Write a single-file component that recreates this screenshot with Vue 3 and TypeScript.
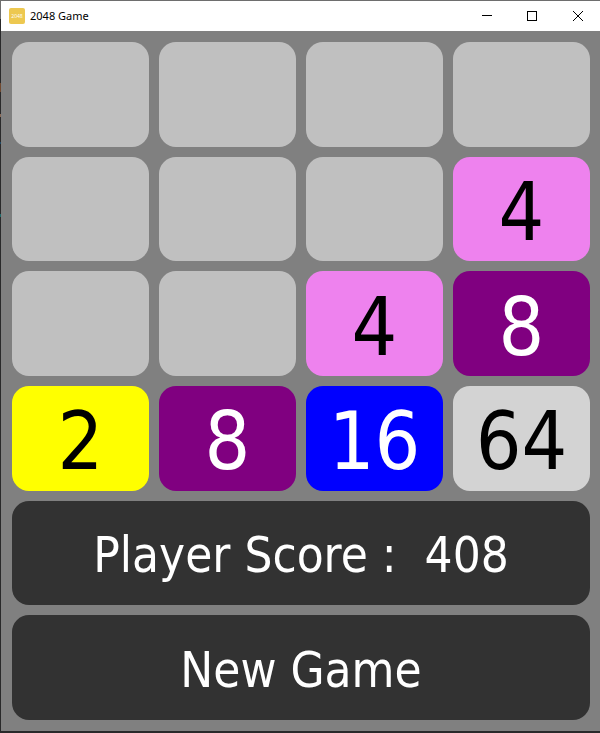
<script setup lang="ts">
import { ref, computed } from 'vue'

type Grid = number[][]

const grid = ref<Grid>([
  [0, 0, 0, 0],
  [0, 0, 0, 4],
  [0, 0, 4, 8],
  [2, 8, 16, 64],
])
const score = ref<number>(408)
const cells = computed<number[]>(() => grid.value.flat())

function newGame(): void {
  const fresh: Grid = Array.from({ length: 4 }, () => [0, 0, 0, 0])
  for (let placed = 0; placed < 2; ) {
    const row = Math.floor(Math.random() * 4)
    const col = Math.floor(Math.random() * 4)
    if (fresh[row][col] === 0) {
      fresh[row][col] = 2
      placed++
    }
  }
  grid.value = fresh
  score.value = 0
}
</script>

<template>
  <div class="window">
    <header class="titlebar">
      <svg class="app-icon" viewBox="0 0 16 16" aria-hidden="true">
        <rect width="16" height="16" rx="2" fill="#edc850" />
        <text x="8" y="10" text-anchor="middle" class="app-icon-text">2048</text>
      </svg>
      <h1 class="title">2048 Game</h1>
      <div class="controls">
        <button type="button" class="control" aria-label="Minimize">
          <svg viewBox="0 0 11 11" class="glyph"><path d="M0 4.5H10" /></svg>
        </button>
        <button type="button" class="control" aria-label="Maximize">
          <svg viewBox="0 0 11 11" class="glyph"><path d="M.5 .5H9.5V9.5H.5Z" /></svg>
        </button>
        <button type="button" class="control" aria-label="Close">
          <svg viewBox="0 0 11 11" class="glyph smooth"><path d="M1 0L11 10M11 0L1 10" /></svg>
        </button>
      </div>
    </header>
    <main class="board">
      <div
        v-for="(value, index) in cells"
        :key="index"
        class="tile"
        :class="`tile-${value}`"
      >{{ value || '' }}</div>
      <div class="panel">Player Score :&nbsp; {{ score }}</div>
      <button type="button" class="panel" @click="newGame">New Game</button>
    </main>
  </div>
</template>

<style>
body {
  margin: 0;
}
</style>

<style scoped>
.window {
  box-sizing: border-box;
  display: flex;
  flex-direction: column;
  min-height: 100vh;
  padding: 1px 0 2px 1px;
  background:
    linear-gradient(#6e6e6e, #6e6e6e) top / 100% 1px no-repeat,
    linear-gradient(
      #6e6e6e 19px, #29292a 19px 83px, #70492f 83px 92px, #29292a 92px 114px,
      #8a6a58 114px 117px, #29292a 117px 142px, #1f4862 142px 144px,
      #29292a 144px 214px, #1f6a6a 214px 217px, #29292a 217px
    );
}

.titlebar {
  display: flex;
  align-items: center;
  height: 30px;
  padding-left: 8px;
  background: #fff;
}

.app-icon {
  width: 16px;
  height: 16px;
}

.app-icon-text {
  fill: #fff;
  font: 5px "Open Sans", sans-serif;
}

.title {
  margin: 0 auto 0 5px;
  color: #000;
  font: 11px/16px "Noto Sans", "Open Sans", sans-serif;
}

.controls {
  display: flex;
  height: 100%;
}

.control {
  display: flex;
  align-items: center;
  justify-content: center;
  width: 45px;
  padding: 0;
  border: 0;
  background: transparent;
}

.control:hover {
  background: #e5e5e5;
}

.glyph {
  width: 11px;
  height: 11px;
  fill: none;
  stroke: #000;
  stroke-width: 1;
  shape-rendering: crispEdges;
}

.smooth {
  shape-rendering: auto;
}

.board {
  flex: 1;
  display: grid;
  grid-template-columns: repeat(4, 1fr);
  grid-template-rows: repeat(6, 1fr);
  gap: 10px;
  padding: 11px 10px 11px 11px;
  background: #808080;
  font-family: "DejaVu Sans Condensed", "DejaVu Sans", sans-serif;
}

.tile,
.panel {
  display: flex;
  align-items: center;
  justify-content: center;
  min-width: 0;
  border: 0;
  border-radius: 17px;
}

.tile {
  padding: 8px 0 0;
  background: #c0c0c0;
  color: #000;
  font-size: 80px;
  line-height: 90px;
}

.tile-2 {
  background: #ffff00;
}

.tile-4 {
  background: #ee82ee;
}

.tile-8 {
  background: #800080;
  color: #fff;
}

.tile-16 {
  background: #0000ff;
  color: #fff;
}

.tile-64 {
  background: #d3d3d3;
}

.panel {
  grid-column: 1 / -1;
  padding: 6px 0 0;
  background: #323232;
  color: #fff;
  font-family: inherit;
  font-size: 49px;
  line-height: 60px;
  white-space: nowrap;
}
</style>
